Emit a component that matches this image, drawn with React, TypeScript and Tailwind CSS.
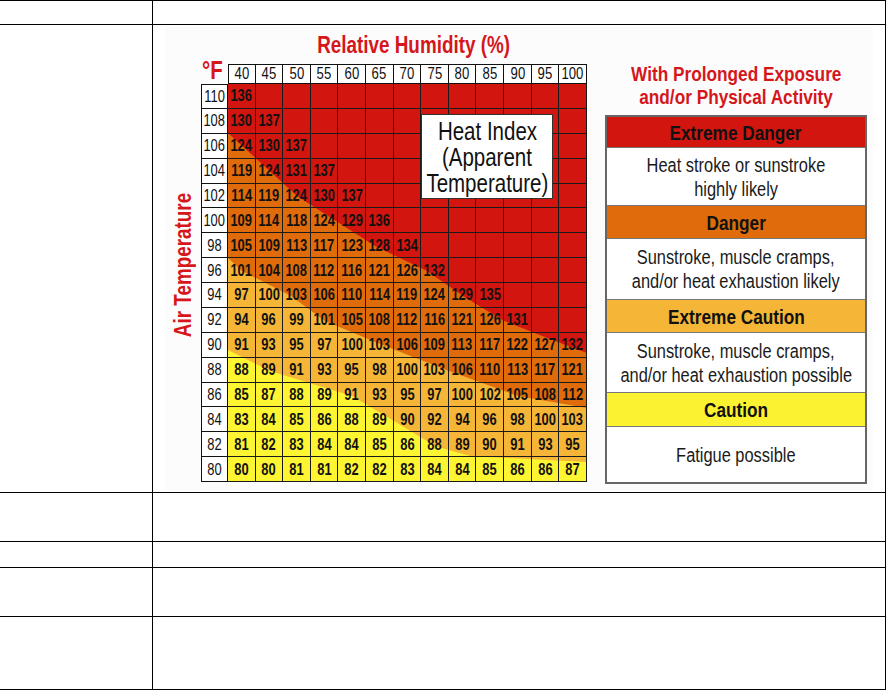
import React from "react";

const SANS = "font-['Liberation_Sans','Arial',sans-serif]";

const temps = [110, 108, 106, 104, 102, 100, 98, 96, 94, 92, 90, 88, 86, 84, 82, 80];
const hums = [40, 45, 50, 55, 60, 65, 70, 75, 80, 85, 90, 95, 100];
const values: number[][] = [
  [136],
  [130, 137],
  [124, 130, 137],
  [119, 124, 131, 137],
  [114, 119, 124, 130, 137],
  [109, 114, 118, 124, 129, 136],
  [105, 109, 113, 117, 123, 128, 134],
  [101, 104, 108, 112, 116, 121, 126, 132],
  [97, 100, 103, 106, 110, 114, 119, 124, 129, 135],
  [94, 96, 99, 101, 105, 108, 112, 116, 121, 126, 131],
  [91, 93, 95, 97, 100, 103, 106, 109, 113, 117, 122, 127, 132],
  [88, 89, 91, 93, 95, 98, 100, 103, 106, 110, 113, 117, 121],
  [85, 87, 88, 89, 91, 93, 95, 97, 100, 102, 105, 108, 112],
  [83, 84, 85, 86, 88, 89, 90, 92, 94, 96, 98, 100, 103],
  [81, 82, 83, 84, 84, 85, 86, 88, 89, 90, 91, 93, 95],
  [80, 80, 81, 81, 82, 82, 83, 84, 84, 85, 86, 86, 87],
];

function N({ children }: { children: React.ReactNode }) {
  return <span className="inline-block whitespace-nowrap scale-x-[0.82]">{children}</span>;
}

function G({ children }: { children: React.ReactNode }) {
  return <span className="inline-block whitespace-nowrap scale-x-[0.76]">{children}</span>;
}

function HeatGrid() {
  return (
    <div
      className={`relative isolate grid grid-cols-[27px_repeat(13,27.615px)] grid-rows-[20px_repeat(16,24.875px)] w-[386px] h-[418px] ${SANS}`}
    >
      <svg
        className="absolute left-[27px] top-[20px] w-[359px] h-[398px] -z-10"
        viewBox="0 0 359 398"
        preserveAspectRatio="none"
      >
        <rect x="0" y="0" width="359" height="398" fill="#fdf531" />
        <polygon
          fill="#f5b637"
          points="0,0 359,0 359,378 242,372 207,362 166,337 124,312 42,287 0,266"
        />
        <polygon
          fill="#e06b0a"
          points="0,0 359,0 359,324 290,312 221,287 157,262 97,237 63,212 14,187 0,174"
        />
        <polygon
          fill="#d3150f"
          points="0,0 359,0 359,269 340,262 276,237 235,212 199,187 147,162 108,137 69,112 0,49"
        />
      </svg>

      {/* corner */}
      <div className="relative">
        <span className="absolute left-[1px] top-[-6px] origin-left inline-block scale-x-[0.82] text-[25px] leading-[25px] font-bold text-[#d5161b] whitespace-nowrap">
          °F
        </span>
      </div>
      {hums.map((h, i) => (
        <div
          key={h}
          className={`flex items-center justify-center bg-white border-t border-r border-b border-[#111] text-[16px] leading-none text-[#111] ${
            i === 0 ? "border-l" : ""
          }`}
        >
          <N>{h}</N>
        </div>
      ))}
      {temps.map((t, r) => (
        <React.Fragment key={t}>
          <div
            className={`flex items-center justify-center bg-white border-l border-r border-b border-[#111] text-[17px] leading-none text-[#111] ${
              r === 0 ? "border-t" : ""
            }`}
          >
            <G>{t}</G>
          </div>
          {hums.map((h, c) => (
            <div
              key={h}
              className="flex items-center justify-center border-r border-b border-[#1a1a1a] text-[17px] leading-none font-bold text-[#111]"
            >
              {values[r][c] !== undefined ? <G>{values[r][c]}</G> : null}
            </div>
          ))}
        </React.Fragment>
      ))}

      <div className="absolute left-[220px] top-[50px] w-[132px] h-[85px] bg-white border border-[#333] flex flex-col items-center justify-center text-[25px] leading-[26px] text-[#111]">
        <N>Heat Index</N>
        <N>(Apparent</N>
        <N>Temperature)</N>
      </div>
    </div>
  );
}

function Legend() {
  const header =
    "flex items-center justify-center border-b border-[#777] text-[21px] leading-none font-bold text-[#111]";
  const body =
    "flex flex-col items-center justify-center border-b border-[#777] bg-white text-[20px] leading-[24px] text-[#1a1a1a]";
  return (
    <div className={`w-[262px] flex flex-col ${SANS}`}>
      <div className="pt-[35px] flex flex-col items-center text-[21px] leading-[23px] font-bold text-[#d5161b]">
        <N>With Prolonged Exposure</N>
        <N>and/or Physical Activity</N>
      </div>
      <div className="mt-[7px] h-[369px] border-2 border-[#666] flex flex-col">
        <div className={`${header} h-[31px] bg-[#d3150f]`}>
          <N>Extreme Danger</N>
        </div>
        <div className={`${body} h-[58px]`}>
          <N>Heat stroke or sunstroke</N>
          <N>highly likely</N>
        </div>
        <div className={`${header} h-[33px] bg-[#e06b0a]`}>
          <N>Danger</N>
        </div>
        <div className={`${body} h-[61px]`}>
          <N>Sunstroke, muscle cramps,</N>
          <N>and/or heat exhaustion likely</N>
        </div>
        <div className={`${header} h-[33px] bg-[#f5b637]`}>
          <N>Extreme Caution</N>
        </div>
        <div className={`${body} h-[60px]`}>
          <N>Sunstroke, muscle cramps,</N>
          <N>and/or heat exhaustion possible</N>
        </div>
        <div className={`${header} h-[34px] bg-[#fbf332]`}>
          <N>Caution</N>
        </div>
        <div className="flex-1 flex items-center justify-center bg-white text-[20px] leading-[24px] text-[#1a1a1a]">
          <N>Fatigue possible</N>
        </div>
      </div>
    </div>
  );
}

function Chart() {
  return (
    <div className="w-[708px] h-[463px] bg-[#fcfcfc] flex">
      <div className="w-[422px] flex flex-col">
        <div className="h-[37px] pt-[7px] pl-[69px]">
          <div className={`w-[359px] text-center text-[23px] leading-[23px] font-bold text-[#d5161b] ${SANS}`}>
            <N>Relative Humidity (%)</N>
          </div>
        </div>
        <div className="flex">
          <div className="w-[36px] flex justify-center items-start pt-[113px]">
            <div
              className={`[writing-mode:vertical-rl] rotate-180 scale-y-[0.82] text-[23px] leading-[23px] font-bold text-[#d5161b] whitespace-nowrap ${SANS}`}
            >
              Air Temperature
            </div>
          </div>
          <HeatGrid />
        </div>
      </div>
      <div className="ml-[18px]">
        <Legend />
      </div>
    </div>
  );
}

export default function App() {
  return (
    <div className="w-[886px] h-[690px] bg-white">
      <div className="w-[886px] border-t border-r border-b border-black">
        <div className="flex h-[24px] border-b border-black">
          <div className="w-[153px] border-r border-black" />
          <div className="flex-1" />
        </div>
        <div className="flex h-[468px] border-b border-black">
          <div className="w-[153px] border-r border-black" />
          <div className="flex-1 pl-[12px] pt-[2px]">
            <Chart />
          </div>
        </div>
        <div className="flex h-[49px] border-b border-black">
          <div className="w-[153px] border-r border-black" />
          <div className="flex-1" />
        </div>
        <div className="flex h-[26px] border-b border-black">
          <div className="w-[153px] border-r border-black" />
          <div className="flex-1" />
        </div>
        <div className="flex h-[49px] border-b border-black">
          <div className="w-[153px] border-r border-black" />
          <div className="flex-1" />
        </div>
        <div className="flex h-[72px]">
          <div className="w-[153px] border-r border-black" />
          <div className="flex-1" />
        </div>
      </div>
    </div>
  );
}
